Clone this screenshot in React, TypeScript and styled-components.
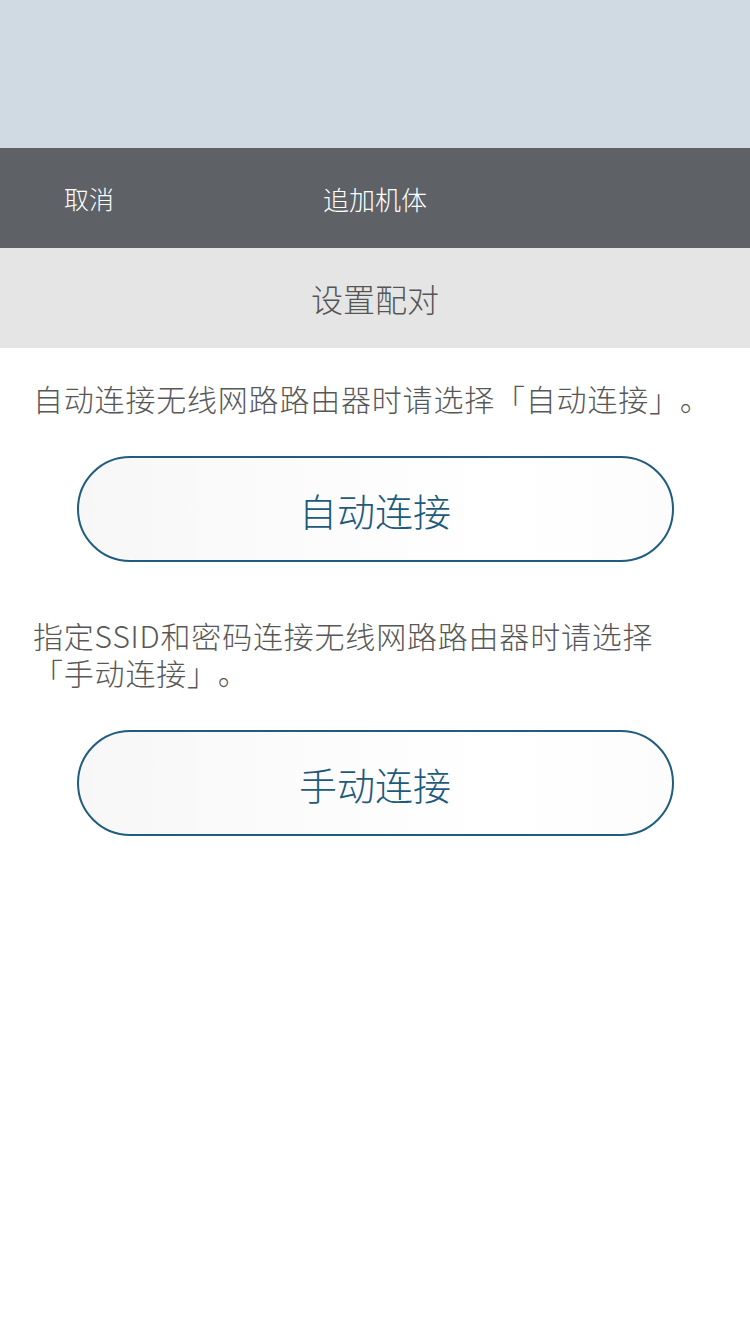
import React from 'react';
import styled, { createGlobalStyle } from 'styled-components';

const GlobalStyle = createGlobalStyle`
    html, body {
        margin: 0;
        padding: 0;
        background: #ffffff;
    }
    body {
        font-family: "Noto Sans CJK SC", "Noto Sans", sans-serif;
    }
`

const Page = styled.div`
    width: 750px;
    min-height: 1334px;
    background: #ffffff;
    display: flex;
    flex-direction: column;
`

const StatusArea = styled.div`
    height: 148px;
    background-color: #d0dae2;
`

const NavBar = styled.div`
    height: 100px;
    background-color: #5e6266;
    display: grid;
    grid-template-columns: 1fr auto 1fr;
    align-items: center;
    padding: 0 64px;
`

const NavButton = styled.span`
    font-size: 25px;
    font-weight: 300;
    color: #ffffff;
    justify-self: start;
`

const NavTitle = styled.span`
    font-size: 26px;
    font-weight: 300;
    color: #ffffff;
`

const SubHeader = styled.div`
    height: 100px;
    background-color: #e5e5e5;
    display: flex;
    align-items: center;
    justify-content: center;
    font-size: 32px;
    font-weight: 300;
    color: #555555;
`

const Content = styled.div`
    display: flex;
    flex-direction: column;
    padding: 0 33px;
`

// keep-all: wrap only at the opening bracket, like the app does
const Description = styled.p<{ top: number }>`
    margin: ${props => props.top}px 0 0 0;
    font-size: 30px;
    font-weight: 300;
    line-height: 37px;
    letter-spacing: 0.8px;
    text-spacing-trim: space-all;
    word-break: keep-all;
    color: #575757;
`

const ConnectButton = styled.button`
    align-self: center;
    width: 597px;
    height: 106px;
    margin-top: 39px;
    border: 2px solid #1f5c7e;
    border-radius: 53px;
    background: linear-gradient(to right, #f7f7f7, #ffffff 70%, #fcfcfc);
    color: #1d5a7c;
    font-family: "Noto Sans CJK SC", "Noto Sans", sans-serif;
    font-size: 38px;
    font-weight: 300;
    cursor: pointer;
`

export default function App() {
    return (
        <Page>
            <GlobalStyle />
            <StatusArea />
            <NavBar>
                <NavButton>取消</NavButton>
                <NavTitle>追加机体</NavTitle>
                <span />
            </NavBar>
            <SubHeader>设置配对</SubHeader>
            <Content>
                <Description top={32}>自动连接无线网路路由器时请选择「自动连接」。</Description>
                <ConnectButton>自动连接</ConnectButton>
                <Description top={55}>指定SSID和密码连接无线网路路由器时请选择「手动连接」。</Description>
                <ConnectButton>手动连接</ConnectButton>
            </Content>
        </Page>
    );
}
